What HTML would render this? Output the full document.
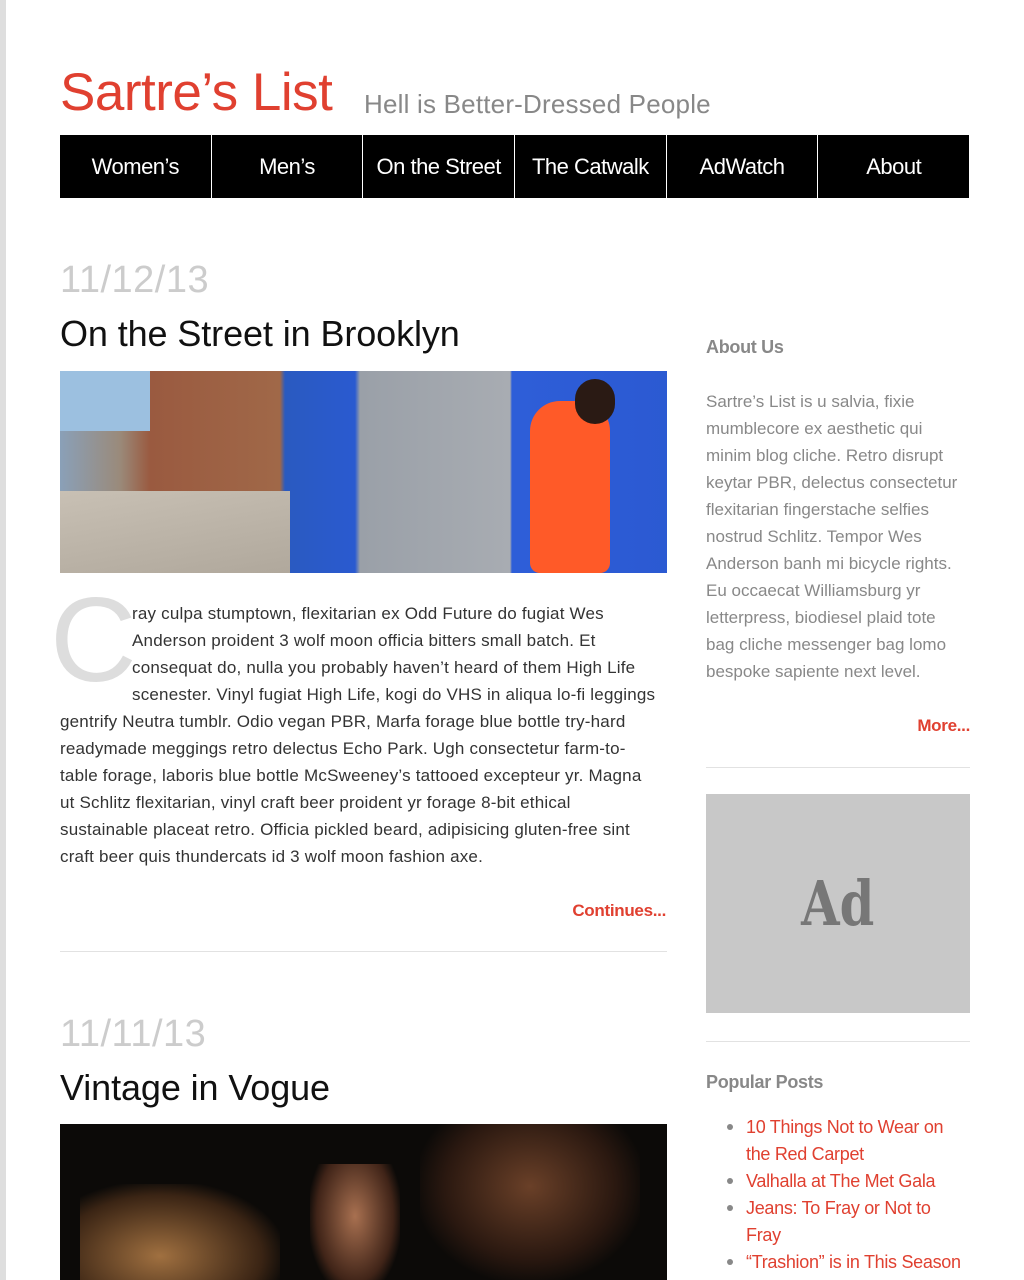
<!DOCTYPE html>
<html><head><meta charset="utf-8"><style>
*{margin:0;padding:0;box-sizing:border-box}
body{width:1024px;height:1280px;overflow:hidden;background:#fff;font-family:"Liberation Sans",sans-serif;position:relative}
.a{position:absolute;white-space:nowrap}
.lb{position:absolute;left:0;top:0;width:6px;height:1280px;background:#dedede}
.nav{position:absolute;left:60px;top:135px;width:909px;height:63px;display:flex;background:#fff;gap:1px}
.nav div{flex:1;background:#000;color:#fff;font-size:22px;display:flex;align-items:center;justify-content:center;letter-spacing:-0.5px}
.p{font-size:17px;color:#333;line-height:27px;letter-spacing:0.2px}
.s{font-size:17px;color:#888;line-height:27px;letter-spacing:0px}
.red{color:#e04030}
.hr{position:absolute;height:1px;background:#e2e2e2}
</style></head><body>
<div class="lb"></div>
<div class="a" style="left:60px;top:62px;font-size:53px;color:#e04030;letter-spacing:-0.5px">Sartre’s List</div>
<div class="a" style="left:364px;top:89px;font-size:26px;color:#888;letter-spacing:0.2px">Hell is Better-Dressed People</div>
<div class="nav"><div>Women’s</div><div>Men’s</div><div>On the Street</div><div>The Catwalk</div><div>AdWatch</div><div>About</div></div>

<div class="a" style="left:60px;top:259px;font-size:38px;color:#ccc;letter-spacing:0.5px">11/12/13</div>
<div class="a" style="left:60px;top:313px;font-size:36px;color:#111;letter-spacing:-0.1px">On the Street in Brooklyn</div>
<div class="a" style="left:60px;top:371px;width:607px;height:202px;overflow:hidden;background:linear-gradient(90deg,#8aa0b8 0,#9a8a7a 60px,#9a5a40 90px,#a06848 220px,#2a5ac0 225px,#2a5ad0 295px,#9aa0a8 300px,#a8acb2 450px,#2e5ed8 452px,#2a58d0 667px)">
  <div style="position:absolute;left:0;top:120px;width:230px;height:82px;background:linear-gradient(170deg,#c8c0b4,#b0a89c)"></div>
  <div style="position:absolute;left:0;top:0;width:90px;height:60px;background:#9cc0e0"></div>
  <div style="position:absolute;left:470px;top:30px;width:80px;height:172px;background:#ff5a28;border-radius:30px 30px 10px 10px"></div>
  <div style="position:absolute;left:515px;top:8px;width:40px;height:45px;background:#2a1a14;border-radius:20px"></div>
</div>
<div class="a" style="left:50px;top:580px;font-size:120px;color:#ddd;line-height:120px">C</div>
<div class="a p" style="left:132px;top:600px">ray culpa stumptown, flexitarian ex Odd Future do fugiat Wes<br>Anderson proident 3 wolf moon officia bitters small batch. Et<br>consequat do, nulla you probably haven’t heard of them High Life<br>scenester. Vinyl fugiat High Life, kogi do VHS in aliqua lo-fi leggings</div>
<div class="a p" style="left:60px;top:708px">gentrify Neutra tumblr. Odio vegan PBR, Marfa forage blue bottle try-hard<br>readymade meggings retro delectus Echo Park. Ugh consectetur farm-to-<br>table forage, laboris blue bottle McSweeney’s tattooed excepteur yr. Magna<br>ut Schlitz flexitarian, vinyl craft beer proident yr forage 8-bit ethical<br>sustainable placeat retro. Officia pickled beard, adipisicing gluten-free sint<br>craft beer quis thundercats id 3 wolf moon fashion axe.</div>
<div class="a red" style="right:358px;top:901px;font-size:17px;font-weight:bold;letter-spacing:-0.3px">Continues...</div>
<div class="hr" style="left:60px;top:951px;width:607px"></div>

<div class="a" style="left:60px;top:1013px;font-size:38px;color:#ccc;letter-spacing:0.5px">11/11/13</div>
<div class="a" style="left:60px;top:1067px;font-size:36px;color:#111;letter-spacing:-0.1px">Vintage in Vogue</div>
<div class="a" style="left:60px;top:1124px;width:607px;height:156px;overflow:hidden;background:#0c0a08">
  <div style="position:absolute;left:20px;top:60px;width:200px;height:120px;background:radial-gradient(ellipse at 40% 60%,#a07040,#3a2414 60%,transparent 75%)"></div>
  <div style="position:absolute;left:250px;top:40px;width:90px;height:130px;background:radial-gradient(ellipse at 50% 40%,#a87050,#402418 60%,transparent 75%)"></div>
  <div style="position:absolute;left:360px;top:0;width:220px;height:156px;background:radial-gradient(ellipse at 50% 40%,#6a4028,#2a1810 55%,transparent 75%)"></div>
</div>

<div class="a" style="left:706px;top:337px;font-size:18px;font-weight:bold;color:#888;letter-spacing:-0.3px">About Us</div>
<div class="a s" style="left:706px;top:388px">Sartre’s List is u salvia, fixie<br>mumblecore ex aesthetic qui<br>minim blog cliche. Retro disrupt<br>keytar PBR, delectus consectetur<br>flexitarian fingerstache selfies<br>nostrud Schlitz. Tempor Wes<br>Anderson banh mi bicycle rights.<br>Eu occaecat Williamsburg yr<br>letterpress, biodiesel plaid tote<br>bag cliche messenger bag lomo<br>bespoke sapiente next level.</div>
<div class="a red" style="right:54px;top:716px;font-size:17px;font-weight:bold;letter-spacing:-0.3px">More...</div>
<div class="hr" style="left:706px;top:767px;width:264px"></div>
<div class="a" style="left:706px;top:794px;width:264px;height:219px;background:#c8c8c8;display:flex;align-items:center;justify-content:center;font-family:'DejaVu Serif','Liberation Serif',serif;font-weight:bold;font-size:62px;color:#777"><span style="display:inline-block;transform:scaleX(0.8)">Ad</span></div>
<div class="hr" style="left:706px;top:1041px;width:264px"></div>
<div class="a" style="left:706px;top:1072px;font-size:18px;font-weight:bold;color:#888;letter-spacing:-0.3px">Popular Posts</div>
<div class="a red" style="left:746px;top:1114px;font-size:18px;line-height:27px;letter-spacing:-0.3px">10 Things Not to Wear on<br>the Red Carpet<br>Valhalla at The Met Gala<br>Jeans: To Fray or Not to<br>Fray<br>“Trashion” is in This Season</div>
<div class="a" style="left:727px;top:1124px;width:6px;height:6px;border-radius:3px;background:#888"></div>
<div class="a" style="left:727px;top:1178px;width:6px;height:6px;border-radius:3px;background:#888"></div>
<div class="a" style="left:727px;top:1205px;width:6px;height:6px;border-radius:3px;background:#888"></div>
<div class="a" style="left:727px;top:1259px;width:6px;height:6px;border-radius:3px;background:#888"></div>
</body></html>
